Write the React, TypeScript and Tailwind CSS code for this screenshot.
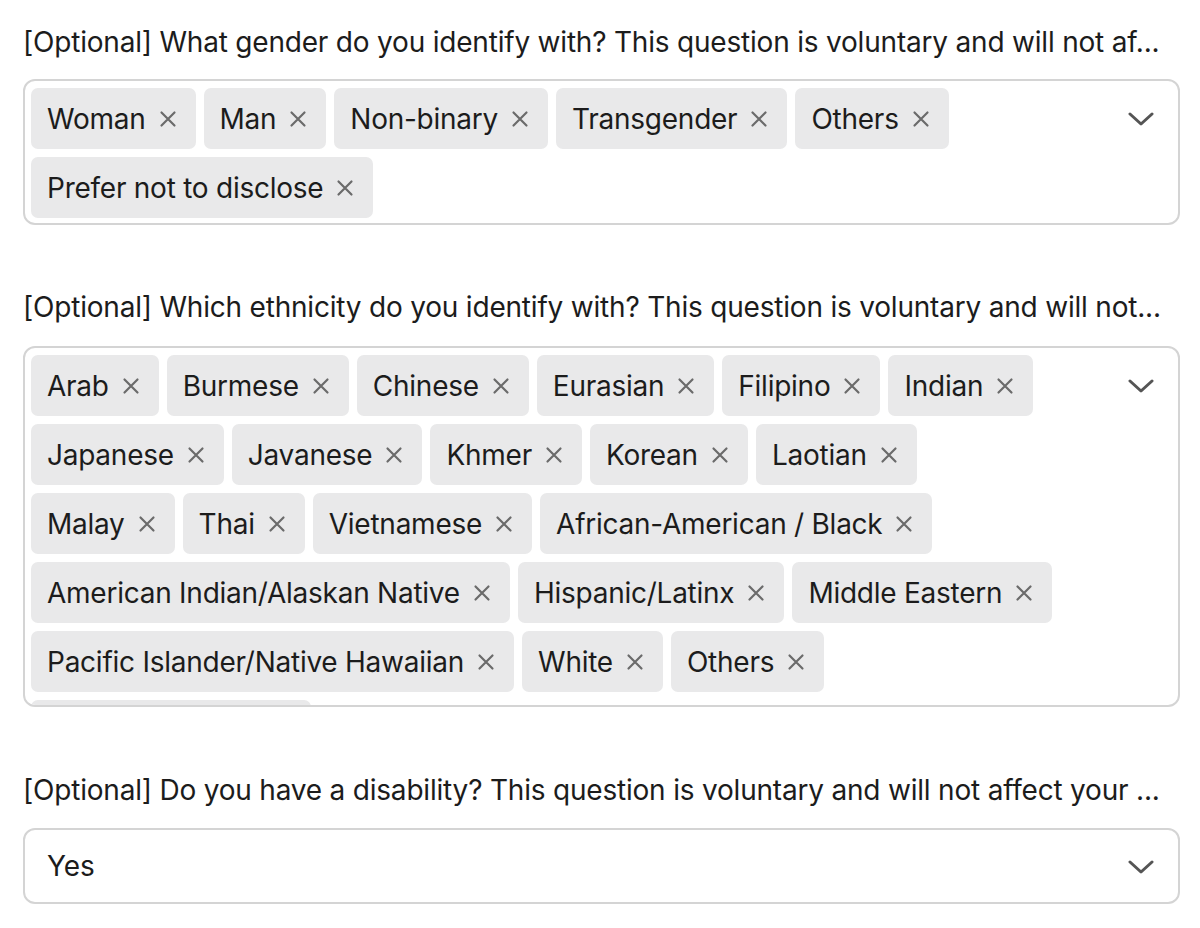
import React from "react";

const X = () => (
  <svg width="20" height="20" viewBox="0 0 20 20" className="shrink-0">
    <path d="M3.5 3.5 L16.5 16.5 M16.5 3.5 L3.5 16.5" stroke="#6b6b6b" strokeWidth="2.2" strokeLinecap="round" />
  </svg>
);

const Chevron = () => (
  <svg width="26" height="16" viewBox="0 0 26 16">
    <path d="M2 3 L13 13 L24 3" stroke="#555555" strokeWidth="3" fill="none" strokeLinecap="round" strokeLinejoin="round" />
  </svg>
);

const Tag = ({ label }: { label: string }) => (
  <div className="flex items-center h-[61px] pl-[16px] pr-[18px] gap-[12px] bg-[#e9e9ea] rounded-[7px] text-[28px] text-[#1c1c1c] tracking-[-0.25px]">
    <span>{label}</span>
    <X />
  </div>
);

const Multi = ({ tags, h }: { tags: string[]; h?: string }) => (
  <div className={`relative border-2 border-[#d4d4d4] rounded-[12px] pl-[6px] pt-[7px] pb-[6px] pr-[120px] overflow-hidden ${h ?? ""}`}>
    <div className="flex flex-wrap gap-[8px]">
      {tags.map((t, i) => (
        <Tag key={t + i} label={t} />
      ))}
    </div>
    <div className="absolute right-[24px] top-[30px]">
      <Chevron />
    </div>
  </div>
);

export default function App() {
  const gender = ["Woman", "Man", "Non-binary", "Transgender", "Others", "Prefer not to disclose"];
  const eth = [
    "Arab", "Burmese", "Chinese", "Eurasian", "Filipino", "Indian",
    "Japanese", "Javanese", "Khmer", "Korean", "Laotian",
    "Malay", "Thai", "Vietnamese", "African-American / Black",
    "American Indian/Alaskan Native", "Hispanic/Latinx", "Middle Eastern",
    "Pacific Islander/Native Hawaiian", "White", "Others", "Prefer not to say",
  ];
  return (
    <div className="bg-white min-h-[928px] pl-[23px] pr-[20px] pt-[24px] text-[#1c1c1c]" style={{ fontFamily: "Inter, 'Noto Sans', sans-serif" }}>
      <div className="text-[28px] leading-[36px] tracking-[-0.2px] mb-[19px] whitespace-nowrap">
        [Optional] What gender do you identify with? This question is voluntary and will not af...
      </div>
      <Multi tags={gender} h="h-[146px]" />
      <div className="text-[28px] leading-[36px] tracking-[-0.2px] mt-[64px] mb-[21px] whitespace-nowrap">
        [Optional] Which ethnicity do you identify with? This question is voluntary and will not...
      </div>
      <Multi tags={eth} h="h-[361px]" />
      <div className="text-[28px] leading-[36px] tracking-[-0.2px] mt-[65px] mb-[20px] whitespace-nowrap">
        [Optional] Do you have a disability? This question is voluntary and will not affect your ...
      </div>
      <div className="relative border-2 border-[#d4d4d4] rounded-[12px] h-[76px] flex items-center pl-[22px]">
        <span className="text-[28px] tracking-[-0.1px]">Yes</span>
        <div className="absolute right-[24px] top-[29px]">
          <Chevron />
        </div>
      </div>
    </div>
  );
}
